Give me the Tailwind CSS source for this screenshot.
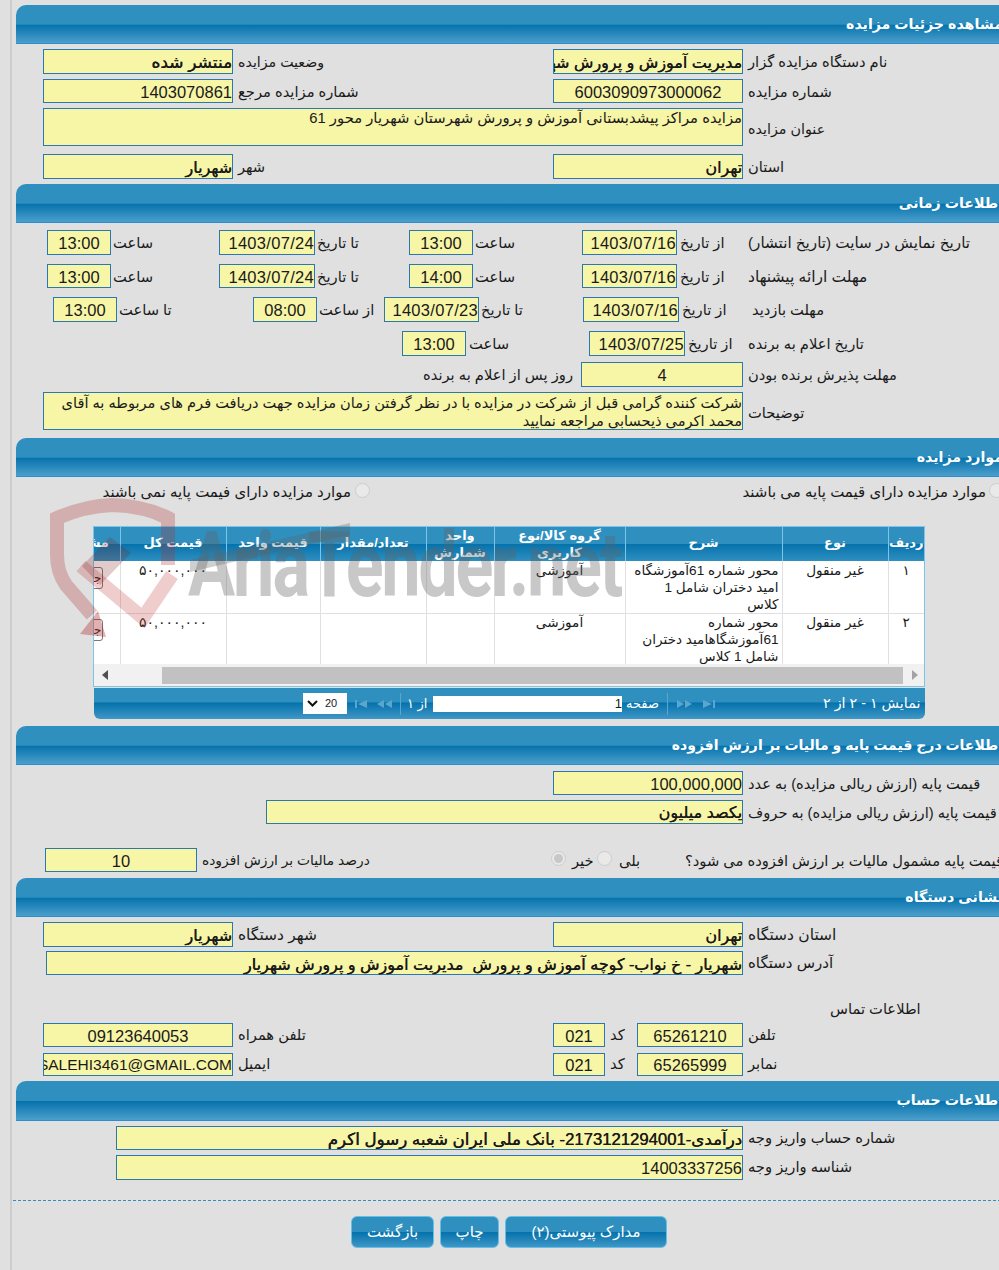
<!DOCTYPE html>
<html lang="fa">
<head>
  <meta charset="UTF-8">
  <title>مشاهده جزئیات مزایده</title>
  <script src="https://cdn.jsdelivr.net/npm/@tailwindcss/browser@4"></script>
</head>
<body class="bg-[#e0e0e0] text-[#1a1a1a] text-[14.7px] [font-family:'Liberation_Sans','DejaVu_Sans',sans-serif] overflow-hidden h-[1270px] w-[999px] relative">
<div class="ml-[10px] border-l-2 border-[#cccccc] pl-[4px] h-[1270px] pt-[5px]">
<div class="w-[1000px]">

  <!-- جزئیات -->
  <div dir="rtl" class="h-[39px] rounded-tl-[10px] border-b border-[#2a8ed0] pr-[13px] pt-[9px] text-white font-bold text-[14.2px] bg-[linear-gradient(#2f90c0_0%,#2f90c0_51%,#0572ac_52%,#4b9fcb_100%)]">مشاهده جزئیات مزایده</div>
  <div class="flex mt-[5px] h-[25px] items-center">
    <div dir="rtl" class="ml-[27px] w-[190px] h-full border border-[#2a78ad] bg-[#f7f5a6] overflow-hidden whitespace-nowrap text-right text-[17px] [text-shadow:0.4px_0_0_currentColor] leading-[25px]">منتشر شده</div>
    <div dir="rtl" class="ml-[5px] w-[315px] pt-[2px] text-left text-[14.2px]">وضعیت مزایده</div>
    <div dir="rtl" class="w-[190px] h-full border border-[#2a78ad] bg-[#f7f5a6] overflow-hidden whitespace-nowrap text-right text-[16px] [text-shadow:0.4px_0_0_currentColor] leading-[25px]">مدیریت آموزش و پرورش شهرستان شهریار</div>
    <div dir="rtl" class="ml-[5px] w-[240px] pt-[2px] text-left">نام دستگاه مزایده گزار</div>
  </div>
  <div class="flex mt-[5px] h-[24px] items-center">
    <div class="ml-[27px] w-[190px] h-full border border-[#2a78ad] bg-[#f7f5a6] text-right text-[16.5px] leading-[24px]">1403070861</div>
    <div dir="rtl" class="ml-[5px] w-[315px] pt-[2px] text-left">شماره مزایده مرجع</div>
    <div class="w-[190px] h-full border border-[#2a78ad] bg-[#f7f5a6] text-center text-[16.5px] leading-[24px]">6003090973000062</div>
    <div dir="rtl" class="ml-[5px] w-[240px] pt-[2px] text-left">شماره مزایده</div>
  </div>
  <div class="flex mt-[5px] h-[38px] items-center">
    <div dir="rtl" class="ml-[27px] w-[700px] h-full border border-[#2a78ad] bg-[#f7f5a6] text-right text-[14.8px] leading-[19px]">مزایده مراکز پیشدبستانی آموزش و پرورش شهرستان شهریار محور 61</div>
    <div dir="rtl" class="ml-[5px] w-[240px] pt-[6px] text-left text-[14.3px]">عنوان مزایده</div>
  </div>
  <div class="flex mt-[8px] h-[25px] items-center">
    <div dir="rtl" class="ml-[27px] w-[190px] h-full border border-[#2a78ad] bg-[#f7f5a6] text-right text-[16px] [text-shadow:0.4px_0_0_currentColor] leading-[25px]">شهریار</div>
    <div dir="rtl" class="ml-[5px] w-[315px] pt-[2px] text-left">شهر</div>
    <div dir="rtl" class="w-[190px] h-full border border-[#2a78ad] bg-[#f7f5a6] text-right text-[16px] [text-shadow:0.4px_0_0_currentColor] leading-[25px]">تهران</div>
    <div dir="rtl" class="ml-[5px] w-[240px] pt-[2px] text-left">استان</div>
  </div>

  <!-- اطلاعات زمانی -->
  <div dir="rtl" class="mt-[5px] h-[39px] rounded-tl-[10px] border-b border-[#2a8ed0] pr-[13px] pt-[9px] text-white font-bold text-[14.2px] bg-[linear-gradient(#2f90c0_0%,#2f90c0_51%,#0572ac_52%,#4b9fcb_100%)]">اطلاعات زمانی</div>
  <div class="flex mt-[7px] h-[25px] items-center">
    <div class="ml-[31px] w-[64px] h-full border border-[#2a78ad] bg-[#f7f5a6] text-center text-[16.5px] leading-[25px]">13:00</div>
    <div dir="rtl" class="ml-[2px] w-[106px] pt-[2px] text-left">ساعت</div>
    <div class="w-[96px] h-full border border-[#2a78ad] bg-[#f7f5a6] text-right text-[16.5px] tracking-[0.3px] leading-[25px]">1403/07/24</div>
    <div dir="rtl" class="ml-[2px] w-[92px] pt-[2px] text-left">تا تاریخ</div>
    <div class="w-[64px] h-full border border-[#2a78ad] bg-[#f7f5a6] text-center text-[16.5px] leading-[25px]">13:00</div>
    <div dir="rtl" class="ml-[2px] w-[107px] pt-[2px] text-left">ساعت</div>
    <div class="w-[95px] h-full border border-[#2a78ad] bg-[#f7f5a6] text-right text-[16.5px] tracking-[0.3px] leading-[25px]">1403/07/16</div>
    <div dir="rtl" class="ml-[3px] w-[68px] pt-[2px] text-left">از تاریخ</div>
    <div dir="rtl" class="w-[240px] pt-[2px] text-left text-[15.2px]">تاریخ نمایش در سایت (تاریخ انتشار)</div>
  </div>
  <div class="flex mt-[9px] h-[24px] items-center">
    <div class="ml-[31px] w-[64px] h-full border border-[#2a78ad] bg-[#f7f5a6] text-center text-[16.5px] leading-[24px]">13:00</div>
    <div dir="rtl" class="ml-[2px] w-[106px] pt-[2px] text-left">ساعت</div>
    <div class="w-[96px] h-full border border-[#2a78ad] bg-[#f7f5a6] text-right text-[16.5px] tracking-[0.3px] leading-[24px]">1403/07/24</div>
    <div dir="rtl" class="ml-[2px] w-[92px] pt-[2px] text-left">تا تاریخ</div>
    <div class="w-[64px] h-full border border-[#2a78ad] bg-[#f7f5a6] text-center text-[16.5px] leading-[24px]">14:00</div>
    <div dir="rtl" class="ml-[2px] w-[107px] pt-[2px] text-left">ساعت</div>
    <div class="w-[95px] h-full border border-[#2a78ad] bg-[#f7f5a6] text-right text-[16.5px] tracking-[0.3px] leading-[24px]">1403/07/16</div>
    <div dir="rtl" class="ml-[3px] w-[68px] pt-[2px] text-left">از تاریخ</div>
    <div dir="rtl" class="w-[240px] pt-[2px] text-left text-[15.5px]">مهلت ارائه پیشنهاد</div>
  </div>
  <div class="flex mt-[9px] h-[25px] items-center">
    <div class="ml-[37px] w-[64px] h-full border border-[#2a78ad] bg-[#f7f5a6] text-center text-[16.5px] leading-[25px]">13:00</div>
    <div dir="rtl" class="ml-[2px] w-[134px] pt-[2px] text-left">تا ساعت</div>
    <div class="w-[64px] h-full border border-[#2a78ad] bg-[#f7f5a6] text-center text-[16.5px] leading-[25px]">08:00</div>
    <div dir="rtl" class="ml-[2px] w-[65px] pt-[2px] text-left">از ساعت</div>
    <div class="w-[95px] h-full border border-[#2a78ad] bg-[#f7f5a6] text-right text-[16.5px] tracking-[0.3px] leading-[25px]">1403/07/23</div>
    <div dir="rtl" class="ml-[2px] w-[102px] pt-[2px] text-left">تا تاریخ</div>
    <div class="w-[96px] h-full border border-[#2a78ad] bg-[#f7f5a6] text-right text-[16.5px] tracking-[0.3px] leading-[25px]">1403/07/16</div>
    <div dir="rtl" class="ml-[3px] w-[66px] pt-[2px] text-left">از تاریخ</div>
    <div dir="rtl" class="ml-[4px] w-[240px] pt-[2px] text-left">مهلت بازدید</div>
  </div>
  <div class="flex mt-[9px] h-[25px] items-center">
    <div class="ml-[386px] w-[64px] h-full border border-[#2a78ad] bg-[#f7f5a6] text-center text-[16.5px] leading-[25px]">13:00</div>
    <div dir="rtl" class="ml-[3px] w-[120px] pt-[2px] text-left">ساعت</div>
    <div class="w-[96px] h-full border border-[#2a78ad] bg-[#f7f5a6] text-right text-[16.5px] tracking-[0.3px] leading-[25px]">1403/07/25</div>
    <div dir="rtl" class="ml-[3px] w-[60px] pt-[2px] text-left">از تاریخ</div>
    <div dir="rtl" class="w-[240px] pt-[2px] text-left">تاریخ اعلام به برنده</div>
  </div>
  <div class="flex mt-[6px] h-[25px] items-center">
    <div dir="rtl" class="ml-[407px] w-[158px] pt-[2px] text-left">روز پس از اعلام به برنده</div>
    <div class="w-[162px] h-full border border-[#2a78ad] bg-[#f7f5a6] text-center text-[16.5px] leading-[25px]">4</div>
    <div dir="rtl" class="ml-[5px] w-[240px] pt-[2px] text-left">مهلت پذیرش برنده بودن</div>
  </div>
  <div class="flex mt-[5px] h-[38px] items-center">
    <div dir="rtl" class="ml-[27px] w-[700px] h-full border border-[#2a78ad] bg-[#f7f5a6] text-right text-[14.6px] whitespace-nowrap leading-[18px] pt-[1px]">شرکت کننده گرامی قبل از شرکت در مزایده با در نظر گرفتن زمان مزایده جهت دریافت فرم های مربوطه به آقای<br>محمد اکرمی ذیحسابی مراجعه نمایید</div>
    <div dir="rtl" class="ml-[5px] w-[240px] pt-[4px] text-left">توضیحات</div>
  </div>

  <!-- موارد مزایده -->
  <div dir="rtl" class="mt-[8px] h-[39px] rounded-tl-[10px] border-b border-[#2a8ed0] pr-[13px] pt-[9px] text-white font-bold text-[14.2px] bg-[linear-gradient(#2f90c0_0%,#2f90c0_51%,#0572ac_52%,#4b9fcb_100%)]">موارد مزایده</div>
  <div class="flex mt-[7px] h-[16px] items-center text-[15px] whitespace-nowrap">
    <div dir="rtl" class="ml-[86px] w-[253px] text-right pr-[4px]">موارد مزایده دارای فیمت پایه نمی باشند</div>
    <div class="w-[15px] h-[15px] mb-[4px] rounded-full border border-[#cccccc] bg-[#e9e9e9]"></div>
    <div dir="rtl" class="ml-[372px] w-[244px] text-right">موارد مزایده دارای قیمت پایه می باشند</div>
    <div class="ml-[3px] w-[15px] h-[15px] mb-[4px] rounded-full border border-[#cccccc] bg-[#e9e9e9]"></div>
  </div>

  <div class="ml-[77px] mt-[26px] w-[832px] h-[161px] border border-[#7cc4e8] overflow-hidden bg-white relative" dir="rtl">
    <table class="table-fixed w-[876px] border-collapse absolute right-0 top-0">
      <thead>
        <tr class="h-[33px] text-white font-bold text-[13px] leading-[17px] bg-[linear-gradient(#2f90c0_0%,#2f90c0_49%,#0572ac_50%,#2f8fc0_100%)]">
          <th class="w-[36px] border-l border-[#7cc4e8] font-bold pb-[3px]">ردیف</th>
          <th class="w-[106px] border-l border-[#7cc4e8] font-bold pb-[3px]">نوع</th>
          <th class="w-[157px] border-l border-[#7cc4e8] font-bold pb-[3px]">شرح</th>
          <th class="w-[131px] border-l border-[#7cc4e8] font-bold">گروه کالا/نوع کاربری</th>
          <th class="w-[68px] border-l border-[#7cc4e8] font-bold">واحد شمارش</th>
          <th class="w-[106px] border-l border-[#7cc4e8] font-bold pb-[3px]">تعداد/مقدار</th>
          <th class="w-[94px] border-l border-[#7cc4e8] font-bold pb-[3px]">قیمت واحد</th>
          <th class="w-[106px] border-l border-[#7cc4e8] font-bold pb-[3px]">قیمت کل</th>
          <th class="w-[72px] font-bold pb-[3px]">مشاهده</th>
        </tr>
      </thead>
      <tbody class="leading-[17px] text-[13.6px]">
        <tr class="h-[52px] align-top">
          <td class="border-l border-b border-[#e0e0e0] pt-[1px] text-center">۱</td>
          <td class="border-l border-b border-[#e0e0e0] pt-[1px] text-center">غیر منقول</td>
          <td class="border-l border-b border-[#e0e0e0] pt-[1px] pr-[3px] text-right">محور شماره 61آموزشگاه<br>امید دختران شامل 1<br>کلاس</td>
          <td class="border-l border-b border-[#e0e0e0] pt-[1px] text-center">آموزشی</td>
          <td class="border-l border-b border-[#e0e0e0]"></td>
          <td class="border-l border-b border-[#e0e0e0]"></td>
          <td class="border-l border-b border-[#e0e0e0]"></td>
          <td class="border-l border-b border-[#e0e0e0] pt-[1px] text-center text-[14px]">۵۰,۰۰۰,۰۰۰</td>
          <td class="border-b border-[#e0e0e0]"><div class="mt-[6px] mr-[17px] w-[38px] h-[22px] border border-[#777777] rounded-[3px] text-[12px] leading-[20px] text-center bg-white">جزئیات</div></td>
        </tr>
        <tr class="h-[52px] align-top">
          <td class="border-l border-b border-[#e0e0e0] text-center">۲</td>
          <td class="border-l border-b border-[#e0e0e0] text-center">غیر منقول</td>
          <td class="border-l border-b border-[#e0e0e0] pr-[3px] text-right">محور شماره<br>61آموزشگاهامید دختران<br>شامل 1 کلاس</td>
          <td class="border-l border-b border-[#e0e0e0] text-center">آموزشی</td>
          <td class="border-l border-b border-[#e0e0e0]"></td>
          <td class="border-l border-b border-[#e0e0e0]"></td>
          <td class="border-l border-b border-[#e0e0e0]"></td>
          <td class="border-l border-b border-[#e0e0e0] text-center text-[14px]">۵۰,۰۰۰,۰۰۰</td>
          <td class="border-b border-[#e0e0e0]"><div class="mt-[5px] mr-[17px] w-[38px] h-[22px] border border-[#777777] rounded-[3px] text-[12px] leading-[20px] text-center bg-white">جزئیات</div></td>
        </tr>
      </tbody>
    </table>
    <div dir="ltr" class="absolute left-0 right-0 bottom-0 h-[22px] bg-[#f1f1f1] flex items-center">
      <svg class="ml-[8px]" width="6" height="10" viewBox="0 0 6 10"><path d="M6 0V10L0 5Z" fill="#505050"/></svg>
      <div class="ml-[54px] w-[741px] h-[17px] bg-[#c1c1c1]"></div>
      <svg class="ml-[9px]" width="6" height="10" viewBox="0 0 6 10"><path d="M0 0V10L6 5Z" fill="#a3a3a3"/></svg>
    </div>
  </div>

  <!-- pager -->
  <div class="ml-[78px] mt-[1px] w-[831px] h-[31px] rounded-b-[6px] text-white flex items-center bg-[linear-gradient(#2f90c0_0%,#2f90c0_45%,#0572ac_48%,#3f97c6_100%)]">
    <div class="ml-[209px] w-[44px] h-[21px] bg-white text-[#1a1a1a] text-[11px] flex items-center pl-[4px] gap-[7px]">
      <svg width="11" height="7" viewBox="0 0 11 7"><path d="M1 1L5.500 5.500L10 1" fill="none" stroke="#111111" stroke-width="2"/></svg>
      <span>20</span>
    </div>
    <svg class="ml-[8px]" width="12" height="8" viewBox="0 0 12 8" fill="#5aa6cf"><path d="M0 0H2V8H0ZM12 0V8L3 4Z"/></svg>
    <svg class="ml-[10px]" width="15" height="8" viewBox="0 0 15 8" fill="#5aa6cf"><path d="M7 0V8L0 4ZM15 0V8L8 4Z"/></svg>
    <div class="ml-[8px] w-px h-[22px] bg-[#5aa6cf]"></div>
    <div dir="rtl" class="ml-[6px] w-[22px] text-[13px] text-left">از ۱</div>
    <div class="ml-[4px] w-[189px] h-[16px] bg-white text-[#1a1a1a] text-right text-[13px] leading-[16px]">1</div>
    <div dir="rtl" class="ml-[4px] w-[36px] text-[13px] text-left">صفحه</div>
    <div class="ml-[5px] w-px h-[22px] bg-[#5aa6cf]"></div>
    <svg class="ml-[9px]" width="15" height="8" viewBox="0 0 15 8" fill="#5aa6cf"><path d="M0 0V8L7 4ZM8 0V8L15 4Z"/></svg>
    <svg class="ml-[11px]" width="12" height="8" viewBox="0 0 12 8" fill="#5aa6cf"><path d="M0 0V8L9 4ZM10 0H12V8H10Z"/></svg>
    <div dir="rtl" class="ml-[108px] w-[99px] text-[14.3px] text-left">نمایش ۱ - ۲ از ۲</div>
  </div>

  <!-- قیمت پایه -->
  <div dir="rtl" class="mt-[7px] h-[39px] rounded-tl-[10px] border-b border-[#2a8ed0] pr-[13px] pt-[9px] text-white font-bold text-[14px] bg-[linear-gradient(#2f90c0_0%,#2f90c0_51%,#0572ac_52%,#4b9fcb_100%)]">اطلاعات درج قیمت پایه و مالیات بر ارزش افزوده</div>
  <div class="flex mt-[6px] h-[24px] items-center">
    <div class="ml-[537px] w-[190px] h-full border border-[#2a78ad] bg-[#f7f5a6] text-right text-[16.5px] leading-[24px]">100,000,000</div>
    <div dir="rtl" class="ml-[5px] w-[260px] pt-[2px] text-left">قیمت پایه (ارزش ریالی مزایده) به عدد</div>
  </div>
  <div class="flex mt-[5px] h-[24px] items-center">
    <div dir="rtl" class="ml-[250px] w-[477px] h-full border border-[#2a78ad] bg-[#f7f5a6] text-right text-[16px] [text-shadow:0.4px_0_0_currentColor] leading-[24px]">یکصد میلیون</div>
    <div dir="rtl" class="ml-[5px] w-[260px] pt-[2px] text-left">قیمت پایه (ارزش ریالی مزایده) به حروف</div>
  </div>
  <div class="flex mt-[24px] h-[24px] items-center">
    <div class="ml-[29px] w-[152px] h-full border border-[#2a78ad] bg-[#f7f5a6] text-center text-[16.5px] leading-[24px]">10</div>
    <div dir="rtl" class="ml-[5px] w-[349px] pt-[2px] text-left text-[13.8px]">درصد مالیات بر ارزش افزوده</div>
    <div class="w-[15px] h-[15px] mb-[3px] rounded-full border border-[#cccccc] bg-[#e9e9e9] flex items-center justify-center"><div class="w-[9px] h-[9px] rounded-full bg-[#c8c8c8]"></div></div>
    <div dir="rtl" class="ml-[6px] w-[25px] pt-[2px] text-left">خیر</div>
    <div class="w-[15px] h-[15px] mb-[3px] rounded-full border border-[#cccccc] bg-[#e9e9e9]"></div>
    <div dir="rtl" class="ml-[7px] w-[66px] pt-[2px] text-left">بلی</div>
    <div dir="rtl" class="w-[330px] pt-[2px] text-left">قیمت پایه مشمول مالیات بر ارزش افزوده می شود؟</div>
  </div>

  <!-- نشانی -->
  <div dir="rtl" class="mt-[6px] h-[39px] rounded-tl-[10px] border-b border-[#2a8ed0] pr-[13px] pt-[9px] text-white font-bold text-[14.2px] bg-[linear-gradient(#2f90c0_0%,#2f90c0_51%,#0572ac_52%,#4b9fcb_100%)]">نشانی دستگاه</div>
  <div class="flex mt-[5px] h-[25px] items-center">
    <div dir="rtl" class="ml-[27px] w-[190px] h-full border border-[#2a78ad] bg-[#f7f5a6] text-right text-[16px] [text-shadow:0.4px_0_0_currentColor] leading-[25px]">شهریار</div>
    <div dir="rtl" class="ml-[5px] w-[315px] text-left text-[15.5px]">شهر دستگاه</div>
    <div dir="rtl" class="w-[190px] h-full border border-[#2a78ad] bg-[#f7f5a6] text-right text-[16px] [text-shadow:0.4px_0_0_currentColor] leading-[25px]">تهران</div>
    <div dir="rtl" class="ml-[5px] w-[240px] text-left text-[15.5px]">استان دستگاه</div>
  </div>
  <div class="flex mt-[4px] h-[24px] items-center">
    <div dir="rtl" class="ml-[30px] w-[697px] h-full border border-[#2a78ad] bg-[#f7f5a6] text-right text-[16px] [text-shadow:0.4px_0_0_currentColor] leading-[25px] whitespace-pre">شهریار - خ نواب- کوچه آموزش و پرورش  مدیریت آموزش و پرورش شهریار</div>
    <div dir="rtl" class="ml-[5px] w-[240px] text-left text-[15px]">آدرس دستگاه</div>
  </div>
  <div dir="rtl" class="mt-[24px] ml-[814px] w-[92px] h-[20px] leading-[20px] text-left">اطلاعات تماس</div>
  <div class="flex mt-[4px] h-[24px] items-center">
    <div class="ml-[27px] w-[190px] h-full border border-[#2a78ad] bg-[#f7f5a6] text-center text-[16.5px] leading-[24px]">09123640053</div>
    <div dir="rtl" class="ml-[5px] w-[315px] text-left">تلفن همراه</div>
    <div class="w-[52px] h-full border border-[#2a78ad] bg-[#f7f5a6] text-center text-[16.5px] leading-[24px]">021</div>
    <div dir="rtl" class="ml-[5px] w-[27px] text-left">کد</div>
    <div class="w-[106px] h-full border border-[#2a78ad] bg-[#f7f5a6] text-center text-[16.5px] leading-[24px]">65261210</div>
    <div dir="rtl" class="ml-[5px] w-[240px] text-left">تلفن</div>
  </div>
  <div class="flex mt-[6px] h-[23px] items-center">
    <div class="ml-[27px] w-[190px] h-full border border-[#2a78ad] bg-[#f7f5a6] flex justify-end overflow-hidden whitespace-nowrap text-[15.5px] leading-[22px]"><span class="shrink-0">SALEHI3461@GMAIL.COM</span></div>
    <div dir="rtl" class="ml-[5px] w-[315px] text-left">ایمیل</div>
    <div class="w-[52px] h-full border border-[#2a78ad] bg-[#f7f5a6] text-center text-[16.5px] leading-[23px]">021</div>
    <div dir="rtl" class="ml-[5px] w-[27px] text-left">کد</div>
    <div class="w-[106px] h-full border border-[#2a78ad] bg-[#f7f5a6] text-center text-[16.5px] leading-[23px]">65265999</div>
    <div dir="rtl" class="ml-[5px] w-[240px] text-left">نمابر</div>
  </div>

  <!-- حساب -->
  <div dir="rtl" class="mt-[5px] h-[40px] rounded-tl-[10px] border-b border-[#2a8ed0] pr-[13px] pt-[9px] text-white font-bold text-[14.2px] bg-[linear-gradient(#2f90c0_0%,#2f90c0_51%,#0572ac_52%,#4b9fcb_100%)]">اطلاعات حساب</div>
  <div class="flex mt-[5px] h-[24px] items-center">
    <div dir="rtl" class="ml-[100px] w-[627px] h-full border border-[#2a78ad] bg-[#f7f5a6] text-right text-[16.7px] [text-shadow:0.4px_0_0_currentColor] leading-[25px]">درآمدی-2173121294001- بانک ملی ایران شعبه رسول اکرم</div>
    <div dir="rtl" class="ml-[5px] w-[240px] text-left">شماره حساب واریز وجه</div>
  </div>
  <div class="flex mt-[5px] h-[25px] items-center">
    <div class="ml-[100px] w-[627px] h-full border border-[#2a78ad] bg-[#f7f5a6] text-right text-[16.5px] leading-[25px]">14003337256</div>
    <div dir="rtl" class="ml-[5px] w-[240px] text-left">شناسه واریز وجه</div>
  </div>

  <div class="-ml-[3px] mt-[20px] border-t border-dashed border-[#2f8fc0]"></div>

  <div class="flex mt-[15px] ml-[335px] gap-[6px] text-white text-[15px]">
    <div dir="rtl" class="w-[83px] h-[32px] rounded-[6px] border border-[#66bfe6] text-center leading-[30px] bg-[linear-gradient(#2f90c0_0%,#2f90c0_50%,#0572ac_51%,#3f97c6_100%)]">بازگشت</div>
    <div dir="rtl" class="w-[59px] h-[32px] rounded-[6px] border border-[#66bfe6] text-center leading-[30px] bg-[linear-gradient(#2f90c0_0%,#2f90c0_50%,#0572ac_51%,#3f97c6_100%)]">چاپ</div>
    <div dir="rtl" class="w-[162px] h-[32px] rounded-[6px] border border-[#66bfe6] text-center leading-[30px] bg-[linear-gradient(#2f90c0_0%,#2f90c0_50%,#0572ac_51%,#3f97c6_100%)]">مدارک پیوستی(۲)</div>
  </div>
</div>
</div>

<!-- watermark -->
<svg class="absolute left-[45px] top-[498px] pointer-events-none" width="320" height="145" viewBox="45 498 320 145" fill="none">
  <path d="M92 615L66 585Q57 572 57 555V518Q85 506 112 505Q145 506 168 518V565" stroke="#b03030" stroke-opacity=".28" stroke-width="14"/>
  <path d="M81 566L143 618L172 575" stroke="#c03030" stroke-opacity=".24" stroke-width="14"/>
  <path d="M110 537L131 553L100 585L82 566Z" fill="#802020" fill-opacity=".24"/>
  <path d="M98 611L106 637L80 634Z" fill="#b03030" fill-opacity=".38"/>
  <path d="M190 560L350 523V535L190 572Z" fill="#606060" fill-opacity=".3"/>
</svg>
<div class="absolute left-[188px] top-[516px] pointer-events-none text-[90px] leading-[100px] font-bold tracking-[-3px] text-[#606060]/35 whitespace-nowrap origin-left scale-x-[0.78] [font-family:Roboto,sans-serif]">AriaTender.net</div>
</body>
</html>
